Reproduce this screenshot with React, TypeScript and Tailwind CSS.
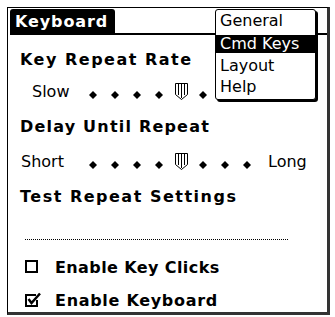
import React from 'react';

const font = { fontFamily: '"DejaVu Sans", Verdana, sans-serif' };

function Diamond() {
  return (
    <svg width="8" height="8" viewBox="0 0 8 8">
      <path d="M4 0 L8 4 L4 8 L0 4 Z" fill="black" />
    </svg>
  );
}

function Thumb() {
  return (
    <svg width="13" height="17" viewBox="0 0 13 17">
      <path d="M0.5 0.5 H12.5 V11.5 L6.5 16.5 L0.5 11.5 Z" fill="white" stroke="black" />
      <path d="M3.5 0.5 V12 M6.5 0.5 V15 M9.5 0.5 V12" stroke="black" />
    </svg>
  );
}

function Slider({ value }: { value: number }) {
  const slots = Array.from({ length: 8 }, (_, i) => i);
  return (
    <div className="flex">
      {slots.map((i) => (
        <div key={i} className={`flex w-[22px] h-[20px] justify-center ${i === value ? 'pt-[1px]' : 'pt-[9px]'}`}>
          {i === value ? <Thumb /> : <Diamond />}
        </div>
      ))}
    </div>
  );
}

function CheckBox({ checked }: { checked: boolean }) {
  if (!checked) return <span className="block w-[13px] h-[13px] border-2 border-black mt-[2px]" />;
  return (
    <svg width="17" height="15" viewBox="0 0 17 15" className="mt-[1px]">
      <path d="M11 3 H1 V14 H12 V8" fill="none" stroke="black" strokeWidth="2" />
      <path d="M3.5 7 L6.5 11 L15 1.5" fill="none" stroke="black" strokeWidth="2.5" />
    </svg>
  );
}

const menuItems = ['General', 'Cmd Keys', 'Layout', 'Help'];

export default function App() {
  return (
    <div className="relative w-[335px] h-[317px] bg-white text-black overflow-hidden" style={font}>
      <div className="ml-[7px] mt-[7px] w-[323px] h-[308px] border-l border-t border-black border-r-[3px] border-b-[3px] border-r-[#333] border-b-[#333]">
        {/* title */}
        <div className="flex items-end h-[27px]">
          <div className="ml-[2px] w-[105px] h-[26px] bg-black rounded-t-[3px] pl-[5px] text-white font-bold text-[16px] leading-[26px] tracking-[0.9px]">
            Keyboard
          </div>
          <div className="flex-1 h-[2px] bg-black" />
        </div>

        <div className="flex flex-col text-[16px] leading-[20px]">
          <div className="mt-[15px] pl-[12px] font-bold tracking-[1.5px] h-[20px]">Key Repeat Rate</div>

          <div className="mt-[12px] flex h-[20px]">
            <div className="w-[74px] pl-[24px]">Slow</div>
            <Slider value={4} />
          </div>

          <div className="mt-[15px] pl-[12px] font-bold tracking-[1.2px] h-[20px]">Delay Until Repeat</div>

          <div className="mt-[15px] flex h-[20px]">
            <div className="w-[74px] pl-[13px]">Short</div>
            <Slider value={4} />
            <div className="ml-[10px]">Long</div>
          </div>

          <div className="mt-[15px] pl-[12px] font-bold tracking-[1.5px] h-[20px]">Test Repeat Settings</div>

          <div className="mt-[32px] ml-[17px] w-[263px] h-[1px] bg-[repeating-linear-gradient(90deg,#000_0_1px,transparent_1px_2px)]" />

          <div className="mt-[18px] flex items-start h-[20px] pl-[17px]">
            <CheckBox checked={false} />
            <span className="ml-[17px] font-bold tracking-[0.4px]">Enable Key Clicks</span>
          </div>

          <div className="mt-[13px] flex items-start h-[20px] pl-[17px]">
            <CheckBox checked />
            <span className="ml-[13px] font-bold tracking-[0.7px]">Enable Keyboard</span>
          </div>
        </div>
      </div>

      {/* menu popup */}
      <div className="absolute left-[215px] top-[9px] w-[101px] border border-black rounded-[3px] bg-white shadow-[2px_2px_0_0_#000] pt-[1px] pb-[2px] text-[16px]">
        {menuItems.map((item, i) => (
          <div
            key={item}
            className={
              i === 1
                ? 'mt-[4px] h-[18px] leading-[18px] pl-[4px] bg-black text-white'
                : i === 2
                ? 'mt-[3px] h-[20px] leading-[20px] pl-[4px]'
                : i === 3
                ? 'mt-[1px] h-[20px] leading-[20px] pl-[4px]'
                : 'h-[20px] leading-[20px] pl-[4px]'
            }
          >
            {item}
          </div>
        ))}
      </div>
    </div>
  );
}
